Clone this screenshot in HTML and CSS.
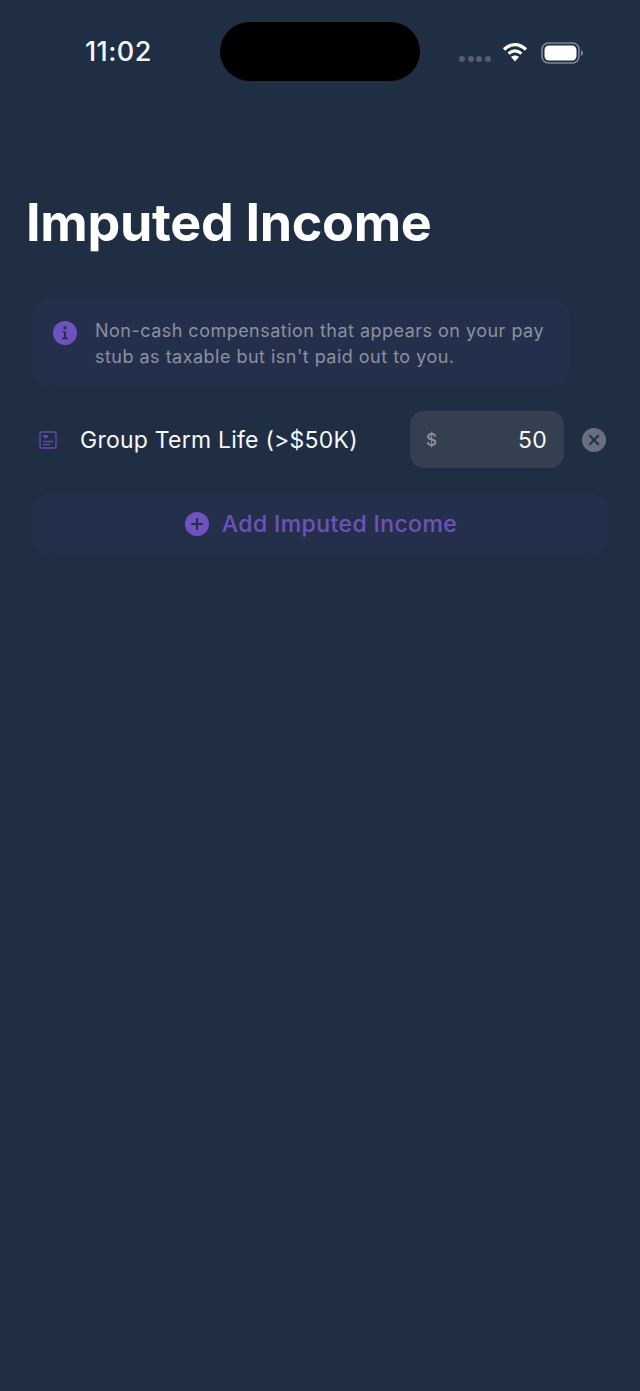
FILE: index.html
```html
<!DOCTYPE html>
<html lang="en">
<head>
    <meta charset="UTF-8">
    <meta name="viewport" content="width=device-width, initial-scale=1.0">
    <title>Imputed Income</title>
    <link rel="stylesheet" href="styles.css">
</head>
<body>
  <div class="status">
    <div class="time">11:02</div>
    <div class="island"></div>
    <div class="status-icons">
      <div class="dots"><span></span><span></span><span></span><span></span></div>
      <svg class="wifi" width="26" height="20" viewBox="0 0 26 20">
        <path d="M2 7.5C9 1 17 1 24 7.5" fill="none" stroke="#fff" stroke-width="3.4"/>
        <path d="M6.6 11.6C10.6 8.2 15.4 8.2 19.4 11.6" fill="none" stroke="#fff" stroke-width="3.2"/>
        <path d="M9 15L13 19.5L17 15C14.6 13 11.4 13 9 15Z" fill="#fff"/>
      </svg>
      <svg class="battery" width="43" height="22" viewBox="0 0 43 22">
        <rect x="1" y="1" width="37" height="20" rx="6.5" fill="none" stroke="#7d8796" stroke-width="1.6"/>
        <rect x="3.5" y="3.5" width="32" height="15" rx="4.5" fill="#fff"/>
        <path d="M40 8.2C41.4 8.6 42 9.6 42 11C42 12.4 41.4 13.4 40 13.8Z" fill="#7d8796"/>
      </svg>
    </div>
  </div>

  <h1 class="title">Imputed Income</h1>

  <div class="note">
    <svg class="note-icon" width="24" height="24" viewBox="0 0 24 24">
      <circle cx="12" cy="12" r="12" fill="#6f52bd"/>
      <circle cx="12" cy="6.8" r="1.7" fill="#232f4b"/>
      <path d="M9.6 10.4H13V16.6H14.8V18.2H9.2V16.6H11V12H9.6Z" fill="#232f4b"/>
    </svg>
    <p class="note-text">Non-cash compensation that appears on your pay stub as taxable but isn't paid out to you.</p>
  </div>

  <div class="row">
    <svg class="row-icon" width="18" height="18" viewBox="0 0 18 18">
      <rect x="1" y="1" width="16" height="16" rx="1.5" fill="none" stroke="#6047a8" stroke-width="1.5"/>
      <path d="M4 4H9V6L6.5 8L4 6Z" fill="#6047a8"/>
      <path d="M4 10.5H14M4 13.5H11" stroke="#6047a8" stroke-width="1.3"/>
    </svg>
    <div class="row-label">Group Term Life (&gt;$50K)</div>
    <div class="amount">
      <span class="dollar">$</span>
      <span class="value">50</span>
    </div>
    <svg class="remove" width="24" height="24" viewBox="0 0 24 24">
      <circle cx="12" cy="12" r="12" fill="#676f80"/>
      <path d="M7.8 7.8L16.2 16.2M16.2 7.8L7.8 16.2" stroke="#232f4b" stroke-width="2" stroke-linecap="round"/>
    </svg>
  </div>

  <div class="add-btn">
    <svg width="24" height="24" viewBox="0 0 24 24">
      <circle cx="12" cy="12" r="12" fill="#6f52bd"/>
      <path d="M12 7V17M7 12H17" stroke="#232f4b" stroke-width="2.2" stroke-linecap="round"/>
    </svg>
    <span>Add Imputed Income</span>
  </div>
</body>
</html>
```

FILE: styles.css
```css
body{
    margin: 0;
    height: 1391px;
    overflow: hidden;
    background-color: #1f2e42;
    font-family: Inter, "Liberation Sans", sans-serif;
    color: white;
}
.status{
    display: flex;
    align-items: flex-start;
    height: 81px;
    padding-top: 22px;
    box-sizing: border-box;
}
.time{
    width: 220px;
    padding: 15px 0 0 85px;
    box-sizing: border-box;
    font-size: 27px;
    line-height: 30px;
    letter-spacing: 0.4px;
    font-weight: 500;
    color: #f4f5f7;
}
.island{
    width: 200px;
    height: 59px;
    background-color: black;
    border-radius: 30px;
}
.status-icons{
    display: flex;
    align-items: center;
    padding-left: 39px;
    padding-top: 19px;
}
.dots{
    display: flex;
    gap: 2.5px;
    margin-top: 12px;
}
.dots span{
    width: 6px;
    height: 6px;
    border-radius: 50%;
    background-color: #545e6e;
}
.wifi{
    margin-left: 11px;
    margin-top: -1px;
}
.battery{
    margin-left: 13px;
    margin-top: 1px;
}
.title{
    margin: 110px 0 0 26px;
    font-size: 52px;
    line-height: 64px;
    font-weight: 700;
    letter-spacing: -0.3px;
    color: white;
}
.note{
    display: flex;
    gap: 18px;
    width: 537px;
    height: 87px;
    margin: 44px 0 0 32px;
    padding: 18.5px 20px 0 21px;
    box-sizing: border-box;
    background-color: #24304b;
    border-radius: 18px;
}
.note-icon{
    flex: none;
    margin-top: 3.5px;
}
.note-text{
    margin: 0;
    font-size: 18px;
    line-height: 26px;
    letter-spacing: 0.48px;
    color: #8a90a0;
}
.row{
    display: flex;
    align-items: center;
    height: 57px;
    margin: 25px 0 0 39px;
}
.row-icon{
    flex: none;
}
.row-label{
    width: 330px;
    margin-left: 23px;
    font-size: 23px;
    letter-spacing: 0.23px;
    color: #f7f8f9;
}
.amount{
    display: flex;
    justify-content: space-between;
    align-items: center;
    width: 154px;
    height: 57px;
    padding: 0 17px 0 16px;
    box-sizing: border-box;
    background-color: #343f4f;
    border-radius: 14px;
}
.dollar{
    font-size: 17px;
    font-weight: 500;
    color: #8b93a0;
}
.value{
    font-size: 23px;
    letter-spacing: 0.3px;
    color: #f7f8f9;
}
.remove{
    flex: none;
    margin-left: 18px;
}
.add-btn{
    display: flex;
    justify-content: center;
    align-items: center;
    gap: 13px;
    width: 576px;
    height: 61px;
    margin: 25px 0 0 32px;
    padding-left: 2px;
    box-sizing: border-box;
    background-color: #24304b;
    border-radius: 18px;
    font-size: 23px;
    font-weight: 500;
    letter-spacing: 0.4px;
    color: #6f52bd;
}
```
